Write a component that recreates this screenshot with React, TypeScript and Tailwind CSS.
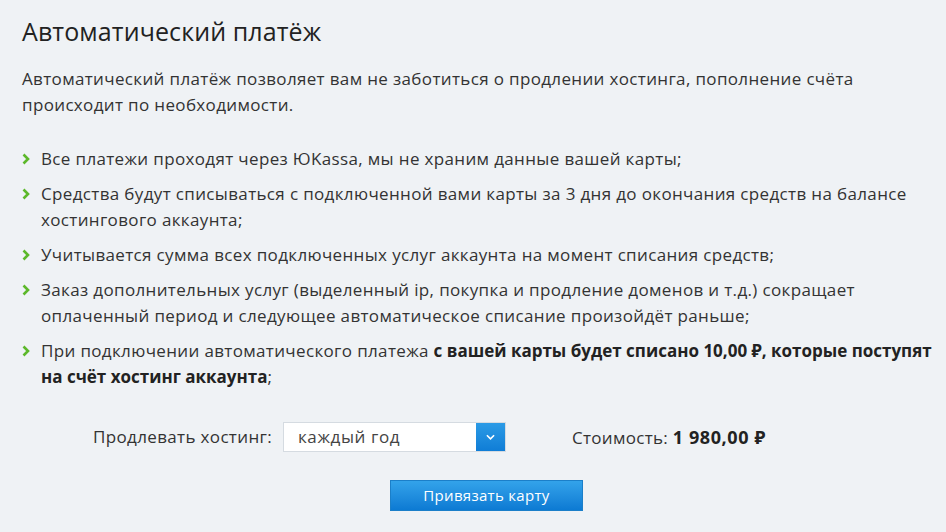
import React from "react";

const items: React.ReactNode[] = [
  "Все платежи проходят через ЮKassa, мы не храним данные вашей карты;",
  "Средства будут списываться с подключенной вами карты за 3 дня до окончания средств на балансе хостингового аккаунта;",
  "Учитывается сумма всех подключенных услуг аккаунта на момент списания средств;",
  "Заказ дополнительных услуг (выделенный ip, покупка и продление доменов и т.д.) сокращает оплаченный период и следующее автоматическое списание произойдёт раньше;",
  <>
    При подключении автоматического платежа{" "}
    <b className="font-bold text-[#222] tracking-[0px]">
      с вашей карты будет списано 10,00 ₽, которые поступят на счёт хостинг аккаунта
    </b>
    ;
  </>,
];

function Chevron() {
  return (
    <svg viewBox="0 0 8 12" className="w-[8px] h-[12px] shrink-0 mt-[7px]">
      <path d="M1.5 1.5 L6 6 L1.5 10.5" fill="none" stroke="#5cb82a" strokeWidth="2.6" />
    </svg>
  );
}

export default function App() {
  return (
    <div
      className="w-[946px] h-[532px] bg-[#eff2f5] text-[#333] pl-[22px] pr-[14px] pt-[13px] overflow-hidden"
      style={{ fontFamily: '"Open Sans", "Noto Sans", sans-serif' }}
    >
      <h1 className="text-[25px] leading-[36px] text-[#222] tracking-[0.1px]">Автоматический платёж</h1>

      <p className="mt-[17px] text-[17px] leading-[26px] tracking-[0.35px]">
        Автоматический платёж позволяет вам не заботиться о продлении хостинга, пополнение счёта
        происходит по необходимости.
      </p>

      <ul className="mt-[28px] flex flex-col gap-[9px]">
        {items.map((t, i) => (
          <li key={i} className="flex gap-[11px] text-[17px] leading-[26px] tracking-[0.35px]">
            <Chevron />
            <span>{t}</span>
          </li>
        ))}
      </ul>

      <div className="mt-[32px] flex items-center pl-[71px]">
        <span className="text-[17px] tracking-[0.35px] text-[#333]">Продлевать хостинг:</span>
        <div className="ml-[11px] flex h-[30px] w-[223px] border border-[#d5dbe1] bg-white">
          <span className="flex-1 pl-[14px] text-[17px] leading-[28px] tracking-[0.6px] text-[#444]">
            каждый год
          </span>
          <span className="w-[29px] flex items-center justify-center bg-gradient-to-b from-[#2b9be6] to-[#0f7dd6]">
            <svg viewBox="0 0 10 6" className="w-[9px] h-[6px]">
              <path d="M1 1 L5 5 L9 1" fill="none" stroke="white" strokeWidth="1.8" />
            </svg>
          </span>
        </div>
        <span className="ml-[66px] text-[17px] tracking-[0.3px] text-[#333]">
          Стоимость: <b className="text-[18px] font-bold text-[#222] tracking-[0.6px]">1 980,00 ₽</b>
        </span>
      </div>

      <div className="mt-[28px] pl-[368px]">
        <button className="w-[193px] h-[31px] border border-[#1b7fc9] bg-gradient-to-b from-[#33a3ea] to-[#0c7ad3] text-white text-[15px] tracking-[0.3px]">
          Привязать карту
        </button>
      </div>
    </div>
  );
}
